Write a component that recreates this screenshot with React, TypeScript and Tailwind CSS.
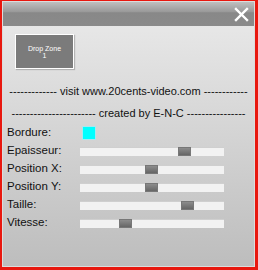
export default function App() {
  const sliders = [
    { label: "Epaisseur:", pos: 98 },
    { label: "Position X:", pos: 65 },
    { label: "Position Y:", pos: 65 },
    { label: "Taille:", pos: 101 },
    { label: "Vitesse:", pos: 39 },
  ];

  return (
    <div
      className="w-[258px] h-[270px] bg-[#e8180f] pl-[2px] pt-[1px] pr-[3px] pb-[3px]"
      style={{ fontFamily: '"Liberation Sans", Arial, sans-serif' }}
    >
      <div className="h-full flex flex-col border border-[#dcdcdc] bg-gradient-to-b from-[#ebebeb] via-[#d4d4d4] to-[#bdbdbd]">
        {/* barre de titre */}
        <div className="h-[24px] flex justify-end items-center pr-[5px] bg-[linear-gradient(to_bottom,#bfbfbf_0%,#9a9a9a_40%,#888_45%,#8a8a8a_100%)]">
          <svg width="15" height="15" viewBox="0 0 15 15">
            <path d="M2 2 L13 13 M13 2 L2 13" stroke="#fff" strokeWidth="2.4" strokeLinecap="square" />
          </svg>
        </div>

        <div className="pl-[12px] pt-[8px]">
          <div className="w-[59px] h-[35px] bg-[#7b7b7b] border border-white shadow-[1px_1px_1px_rgba(0,0,0,0.2)] flex flex-col items-center justify-center text-white text-[7px] leading-[7px]">
            <span>Drop Zone</span>
            <span>1</span>
          </div>
        </div>

        <div className="mt-[11px] text-[11px] leading-[22px] text-[#111] whitespace-nowrap flex flex-col items-center">
          <div>------------- visit www.20cents-video.com ------------</div>
          <div>----------------------- created by E-N-C ----------------</div>
        </div>

        <div className="pl-[4px] text-[11.5px] text-[#111]">
          <div className="flex items-center h-[18px]">
            <span className="w-[73px]">Bordure:</span>
            <span className="ml-[2px] w-[14px] h-[14px] bg-[#00ffff] border border-[#a8e8f0]" />
          </div>
          {sliders.map((s) => (
            <div key={s.label} className="flex items-center h-[18px]">
              <span className="w-[73px]">{s.label}</span>
              <div className="relative w-[144px] h-[9px] bg-[#f2f2f2] border-t border-[#cfcfcf]">
                <div
                  className="absolute top-[-1px] w-[13px] h-[9px] bg-gradient-to-b from-[#8c8c8c] to-[#666] border border-[#777]"
                  style={{ left: s.pos }}
                />
              </div>
            </div>
          ))}
        </div>
      </div>
    </div>
  );
}
